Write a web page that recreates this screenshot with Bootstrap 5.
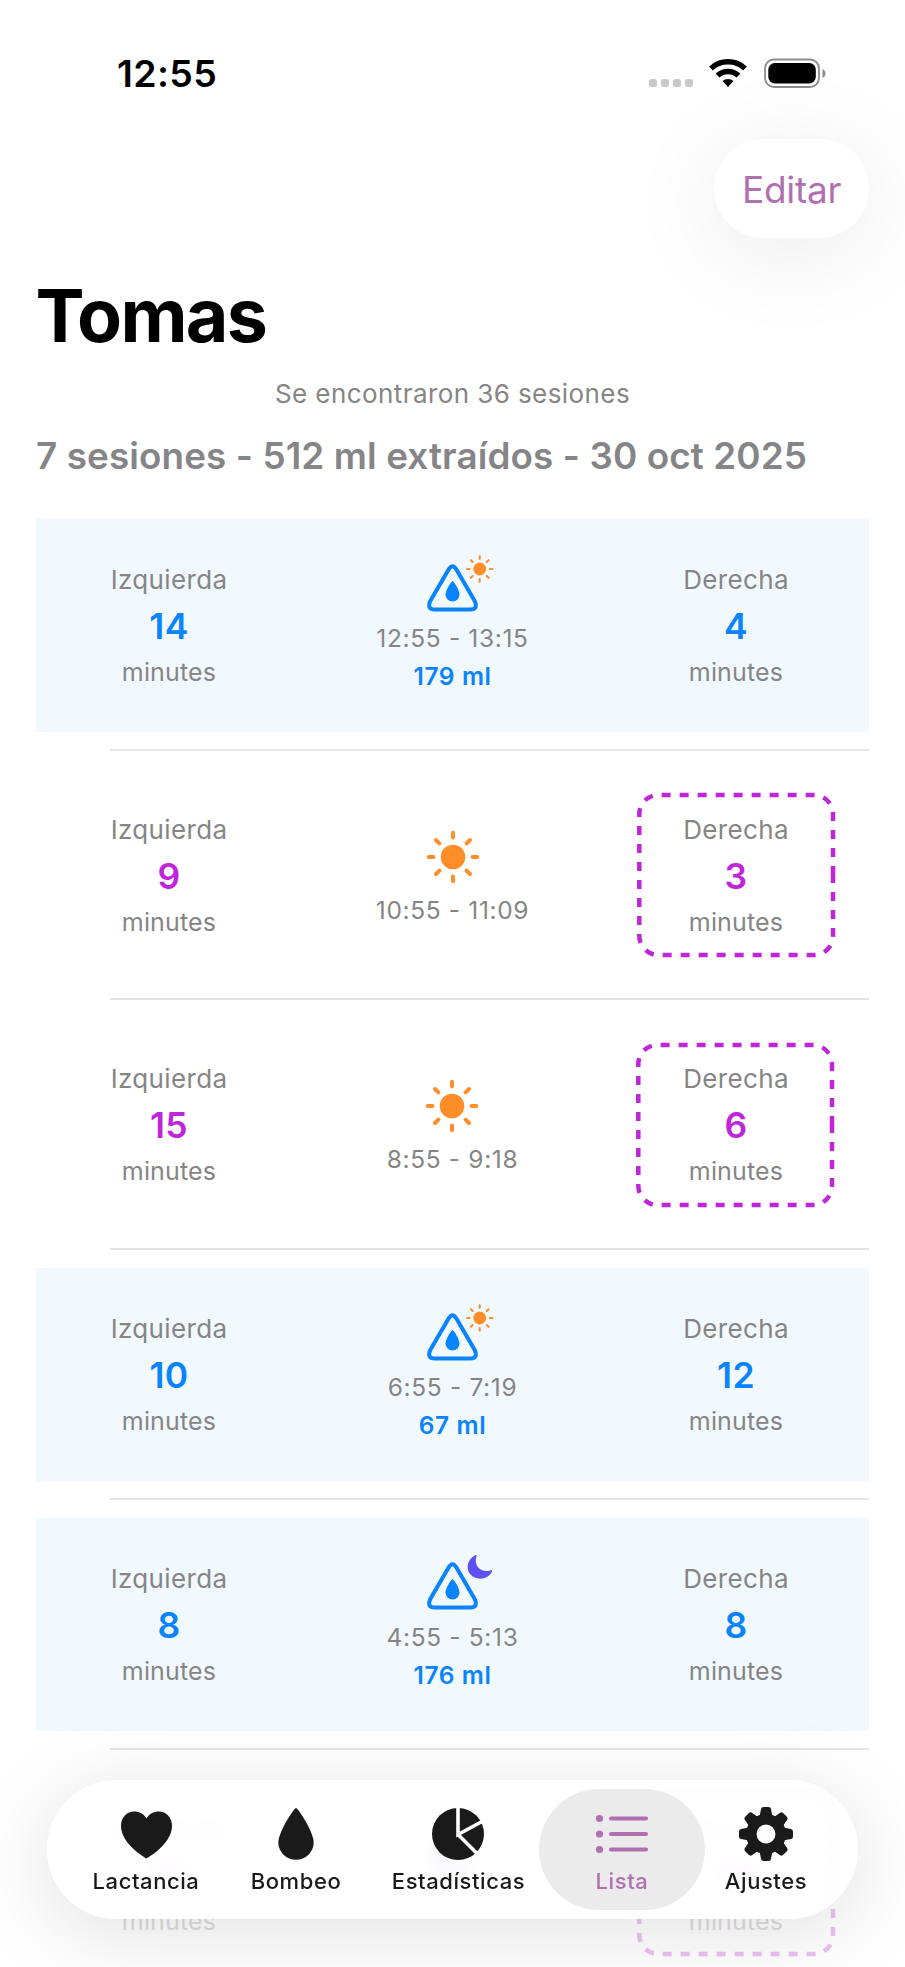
<!DOCTYPE html>
<html lang="es">
<head>
<meta charset="utf-8">
<meta name="viewport" content="width=device-width, initial-scale=1">
<title>Tomas</title>
<link rel="stylesheet" href="https://cdn.jsdelivr.net/npm/bootstrap@5.3.0/dist/css/bootstrap.min.css">
<style>
body{font-family:Inter,"Liberation Sans",sans-serif;background:#fff;color:#000;height:1967px;overflow:hidden;position:relative}
.statusbar{height:139px;padding:50px 78.5px 0 117px}
.clock{font-size:37.5px;line-height:48px;font-weight:600;letter-spacing:.35px}
.status-icons{margin-top:6px}
.edit-pill{width:155px;height:99px;border-radius:50px;background:#fff;color:#b070b0;font-size:37px;box-shadow:0 14px 90px 10px rgba(0,0,0,.065);letter-spacing:-.3px;padding-top:2px}
.page-title{font-size:73.5px;line-height:88px;font-weight:700;letter-spacing:-1.7px;margin:33.5px 0 0 35.5px}
.found{font-size:26px;line-height:32px;color:#858585;margin-top:18.5px;letter-spacing:.42px}
.section-head{font-size:36.8px;line-height:44px;font-weight:600;color:#858587;margin:24px 36px 0;letter-spacing:.12px}
.feed{margin-top:23.1px}
.feed-item{height:249.7px;padding:18px 36px 0}
.feed-box{height:213px}
.feed-box.pump{background:#f1f9fe}
.divider{height:2px;margin:16.7px 0 0 74px;background:#e5e5e6}
.side{width:266px;padding-top:45px;color:#858585;font-size:26px;line-height:32px;letter-spacing:.35px}
.side b{display:block;font-weight:600;font-size:35.5px;line-height:42px;margin:10px 0 8px;color:#c026d9}
.side small{display:block;font-size:25px;letter-spacing:.15px}
.pump .side b,.vol{color:#0a84fc}
.times{color:#858585;font-size:24.5px;line-height:30px;letter-spacing:.65px}
.vol{font-size:24.5px;line-height:30px;font-weight:600;margin-top:8.5px;letter-spacing:.6px}
.mid{padding-top:61px}
.mid svg{display:block;margin:0 auto 11px}
.pump .mid{padding-top:24.5px}
.pump .mid svg{margin-bottom:9.3px;transform:translateX(13.5px)}
.dash{position:absolute;left:33.5px;top:22.5px}
.tabs{position:absolute;left:47px;top:1780px;width:811px;height:139px;border-radius:70px;background:rgba(255,255,255,.86);backdrop-filter:blur(7px);box-shadow:0 14px 80px 8px rgba(0,0,0,.1)}
.tab{font-size:22px;line-height:26px;font-weight:500;letter-spacing:.57px;color:#1a1a1a;text-align:center;white-space:nowrap;height:121px;margin-top:9px;padding-top:18.5px;border-radius:61px}
.tab svg{display:block;margin:0 auto 8.5px}
.tab.active{background:#ebebeb;color:#b070b0}
.behind{opacity:.28}
</style>
</head>
<body>
<svg width="0" height="0" class="position-absolute">
<defs>
<g id="rays" stroke="#ff8d28" stroke-linecap="round"><path d="M0-19.5V-24.3M0 19.5V24.3M-19.5 0H-24.3M19.5 0H24.3M-13.6-13.6L-17-17M13.6-13.6L17-17M-13.6 13.6L-17 17M13.6 13.6L17 17" stroke-width="4"/><circle r="12.3" fill="#ff8d28" stroke="none"/></g>
<symbol id="sun" viewBox="-27 -27 54 54"><use href="#rays"/></symbol>
<g id="tri"><path d="M23.800 26Q28 18.500 32.200 26L50.500 57.500Q53.500 65.500 46 65.500H10Q2.500 65.500 5.500 57.500Z" fill="none" stroke="#0a84fc" stroke-width="4" stroke-linejoin="round"/><path d="M28 37C29 37 35 46 35 50.500A7 7 0 0 1 21 50.500C21 46 27 37 28 37Z" fill="#0a84fc"/></g>
<symbol id="pumpday" viewBox="0 0 84 70"><use href="#tri"/><use href="#rays" transform="translate(55.200 25) scale(.52)"/></symbol>
<symbol id="pumpnight" viewBox="0 0 84 70"><use href="#tri"/><path d="M51 13C43 17 41 26 45.500 32C51 39 64 38 67.500 29.500C67.700 28.500 67 28 66 28.400C56 31 49 24 52 14.200C52.200 13.300 51.800 12.700 51 13Z" fill="#5f50f0"/></symbol>
<symbol id="moon" viewBox="0 0 54 54"><path d="M19 3C2 12 0 30 9 42C20 54 46 52 51 36C51 34 50 33 48 34C30 39 16 25 21 5C21 3 20 2.500 19 3Z" fill="#5f50f0"/></symbol>
<symbol id="dashbox" viewBox="0 0 200 168"><path d="M196 83V145A19 19 0 0 1 177 164H21A19 19 0 0 1 2.300 145V23A19 19 0 0 1 21.300 4H177A19 19 0 0 1 196 23V83" fill="none" stroke="#c026d9" stroke-width="4.500" stroke-dasharray="9 9"/></symbol>
</defs>
</svg>

<header class="statusbar d-flex justify-content-between">
  <div class="clock">12:55</div>
  <svg class="status-icons" width="180" height="36" viewBox="0 0 180 36">
    <g fill="#c9c9cb"><rect x="2" y="23" width="8" height="8" rx="2.500"/><rect x="14" y="23" width="8" height="8" rx="2.500"/><rect x="26" y="23" width="8" height="8" rx="2.500"/><rect x="38" y="23" width="8" height="8" rx="2.500"/></g>
    <g fill="none" stroke="#000" stroke-width="5.500"><path d="M64 12.500A25 25 0 0 1 98 12.500"/><path d="M70.500 19.500A15.500 15.500 0 0 1 91.500 19.500"/></g><path d="M75.500 25A8.500 8.500 0 0 1 86.500 25L81 31Z" fill="#000"/>
    <rect x="118" y="3.500" width="54" height="27.500" rx="9" fill="none" stroke="#8c8c8c" stroke-width="1.800"/><rect x="121.300" y="7" width="47.500" height="20.500" rx="6.500"/><path d="M175.500 13V22Q178.500 20.500 178.500 17.500T175.500 13Z" fill="#8c8c8c"/>
  </svg>
</header>
<div class="d-flex justify-content-end" style="padding-right:36px"><div class="edit-pill d-flex align-items-center justify-content-center">Editar</div></div>
<h1 class="page-title">Tomas</h1>
<div class="found text-center">Se encontraron 36 sesiones</div>
<h2 class="section-head text-nowrap">7 sesiones - 512 ml extraídos - 30 oct 2025</h2>
<main id="feed" class="feed"></main>

<nav class="tabs d-flex">
  <div class="tab" style="width:198px">
    <svg width="52" height="52" viewBox="0 0 52 52"><path d="M26.500 50.500C20.500 47 1 34 1 18C1 9 7 3.500 14 3.500C19.500 3.500 24 6 26.500 10.500C29 6 33.500 3.500 39 3.500C46 3.500 52 9 52 18C52 34 32.500 47 26.500 50.500Z" fill="#1a1a1a"/></svg>Lactancia</div>
  <div class="tab" style="width:102px">
    <svg width="52" height="52" viewBox="0 0 52 52"><path d="M26 0C28 0 43.700 24 43.700 34.500A17.700 17.300 0 0 1 8.300 34.500C8.300 24 24 0 26 0Z" fill="#1a1a1a"/></svg>Bombeo</div>
  <div class="tab d-flex flex-column align-items-center" style="width:192px;padding-left:31px">
    <svg width="52" height="52" viewBox="0 0 52 52" style="margin:0 1px 8.5px 0"><circle cx="26" cy="26" r="26" fill="#1a1a1a"/><path d="M26-1V26.500L51 13M26 26.500L46 46.500" fill="none" stroke="#fff" stroke-width="3.600"/></svg>Estadísticas</div>
  <div class="tab active" style="width:166px">
    <svg width="55" height="52" viewBox="0 0 55 52"><g fill="#b070b0"><circle cx="4.500" cy="10.500" r="3.600"/><circle cx="4.500" cy="26" r="3.600"/><circle cx="4.500" cy="41.500" r="3.600"/><rect x="14" y="8.500" width="39" height="4" rx="2"/><rect x="14" y="24" width="39" height="4" rx="2"/><rect x="14" y="39.500" width="39" height="4" rx="2"/></g></svg>Lista</div>
  <div class="tab" style="width:122px">
    <svg width="54" height="54" viewBox="-27 -27 54 54" style="margin:-1px auto 7.5px"><defs><path id="tooth" d="M-6.500-17L-5-25Q-4.500-27-2.500-27H2.500Q4.500-27 5-25L6.500-17Z"/></defs><g fill="#1a1a1a"><use href="#tooth"/><use href="#tooth" transform="rotate(45)"/><use href="#tooth" transform="rotate(90)"/><use href="#tooth" transform="rotate(135)"/><use href="#tooth" transform="rotate(180)"/><use href="#tooth" transform="rotate(225)"/><use href="#tooth" transform="rotate(270)"/><use href="#tooth" transform="rotate(315)"/></g><circle r="14.700" fill="none" stroke="#1a1a1a" stroke-width="10.500"/></svg>Ajustes</div>
</nav>

<script src="https://cdn.jsdelivr.net/npm/bootstrap@5.3.0/dist/js/bootstrap.bundle.min.js"></script>
<script>
const sessions=[
 {l:14,r:4,t:'12:55 - 13:15',ml:179,icon:'pumpday'},
 {l:9,r:3,t:'10:55 - 11:09',icon:'sun'},
 {l:15,r:6,t:'8:55 - 9:18',icon:'sun'},
 {l:10,r:12,t:'6:55 - 7:19',ml:67,icon:'pumpday'},
 {l:8,r:8,t:'4:55 - 5:13',ml:176,icon:'pumpnight'},
 {l:13,r:18,t:'',icon:'moon',behind:true}
];
document.getElementById('feed').innerHTML=sessions.map(s=>`
<div class="feed-item ${s.behind?'behind':''}"><div class="feed-box d-flex justify-content-between ${s.ml?'pump':''}">
 <div class="side text-center">Izquierda<b>${s.l}</b><small>minutes</small></div>
 <div class="mid text-center">
  <svg width="${s.ml?84:54}" height="${s.ml?70:54}"><use href="#${s.icon}"/></svg>
  <div class="times">${s.t}</div>${s.ml?`<div class="vol">${s.ml} ml</div>`:''}
 </div>
 <div class="side text-center position-relative">${s.ml?'':'<svg class="dash" width="200" height="168"><use href="#dashbox"/></svg>'}Derecha<b>${s.r}</b><small>minutes</small></div>
</div>${s.behind?'':'<div class="divider"></div>'}</div>`).join('');
</script>
</body>
</html>
